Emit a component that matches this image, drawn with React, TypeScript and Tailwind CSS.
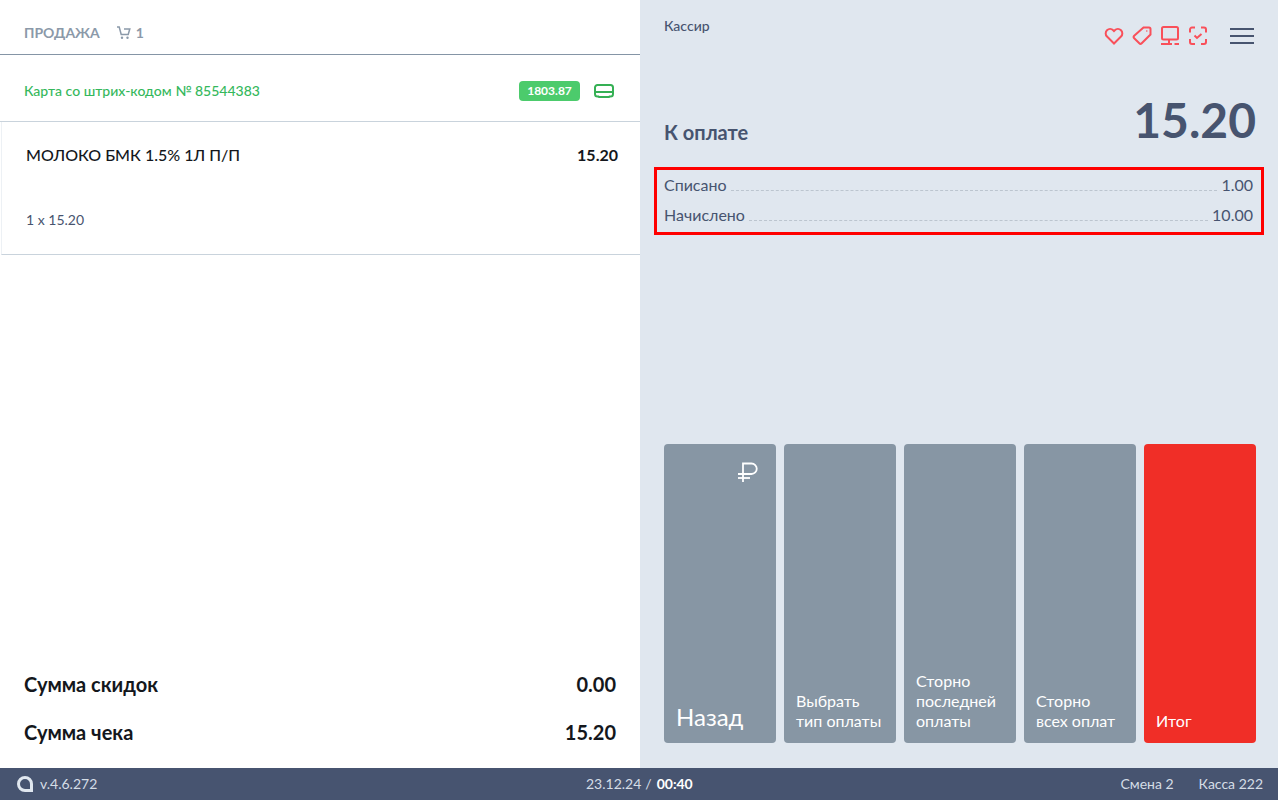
import React from "react";

const Btn = ({ children, bg = "bg-[#8796a4]", big = false, icon = false }: { children: React.ReactNode; bg?: string; big?: boolean; icon?: boolean }) => (
  <div className={`relative flex-1 h-[299px] rounded-[4px] flex flex-col justify-end px-3 ${big ? "pb-[10px] text-[24px] leading-[32px]" : "pb-[12px] text-[16px] leading-[20px]"} text-white ${bg}`}>
    {icon && (
      <svg className="absolute right-[17px] top-[17px]" width="22" height="22" viewBox="0 0 22 22" fill="none" stroke="#fff" strokeWidth="1.8">
        <path d="M6 21V2.5h8.5a5.25 5.25 0 0 1 0 10.5H1" />
        <path d="M1 17H13" />
      </svg>
    )}
    {children}
  </div>
);

const Row = ({ label, value }: { label: string; value: string }) => (
  <div className="flex items-center h-[30px] text-[16px] leading-[24px] text-[#47546f]">
    <span>{label}</span>
    <span className="flex-1 self-end mx-[4px] mb-[9px] border-b border-dashed border-[#bcc5cf]"></span>
    <span>{value}</span>
  </div>
);

export default function App() {
  return (
    <div className="w-[1278px] h-[800px] flex flex-col overflow-hidden bg-white font-['Lato','Noto_Sans',sans-serif]">
      <div className="flex flex-1 min-h-0">
        <div className="w-[640px] flex flex-col">
          <div className="h-[55px] shrink-0 border-b border-[#8595a6] flex items-center pl-[24px] pt-[11px] text-[14px] font-bold text-[#8b99a9]">
            <span>ПРОДАЖА</span>
            <svg className="ml-[16px]" width="16" height="15" viewBox="0 0 16 15" fill="none" stroke="#8b99a9" strokeWidth="1.5">
              <path d="M1 2h2.2l2 7.5h7l1.6-5.5H8" />
              <circle cx="6" cy="12.8" r="1.2" fill="#8b99a9" stroke="none" />
              <circle cx="11.5" cy="12.8" r="1.2" fill="#8b99a9" stroke="none" />
            </svg>
            <span className="ml-[4px]">1</span>
          </div>
          <div className="h-[67px] shrink-0 border-b border-[#c9d3dc] flex items-center pl-[24px] pr-[26px] pt-[6px]">
            <span className="flex-1 pb-[2px] text-[14px] font-medium text-[#35b85c]">Карта со штрих-кодом № 85544383</span>
            <span className="h-[20px] w-[61px] flex items-center justify-center rounded-[4px] bg-[#4ccb6c] text-white text-[12px] font-bold">1803.87</span>
            <svg className="ml-[14px]" width="20" height="16" viewBox="0 0 20 16" fill="none" stroke="#35b054" strokeWidth="2">
              <path d="M3.5 13.5A2.5 2.5 0 0 1 1 11V4.5A2.5 2.5 0 0 1 3.5 2h13A2.5 2.5 0 0 1 19 4.5V11a2.5 2.5 0 0 1-2.5 2.5h-1l-.5.5H5l-.5-.5z" />
              <path d="M1 9h18" />
            </svg>
          </div>
          <div className="h-[133px] shrink-0 ml-[1px] border-l border-l-[#edf1f5] border-b border-b-[#c9d3dc] pl-[24px] pr-[22px] flex flex-col">
            <div className="flex justify-between pt-[22px] text-[16px] leading-[22px] font-medium text-[#14171c]">
              <span>МОЛОКО БМК 1.5% 1Л П/П</span>
              <span className="font-bold">15.20</span>
            </div>
            <div className="mt-[44px] text-[14px] leading-[20px] text-[#47546f]">1 x 15.20</div>
          </div>
          <div className="flex-1"></div>
          <div className="pl-[24px] pr-[24px] pb-[22px] text-[#14171c] font-bold text-[20px] leading-[28px] flex flex-col gap-[20px]">
            <div className="flex justify-between"><span>Сумма скидок</span><span>0.00</span></div>
            <div className="flex justify-between"><span>Сумма чека</span><span>15.20</span></div>
          </div>
        </div>
        <div className="flex-1 bg-[#e0e7ef] flex flex-col relative">
          <div className="flex justify-between pl-[24px] pr-[24px] h-[88px]">
            <span className="pt-[16px] text-[14px] leading-[20px] font-medium text-[#47546f]">Кассир</span>
            <div className="flex items-start pt-[26px]">
              <svg width="20" height="20" viewBox="0 0 20 20" fill="none" stroke="#f9505a" strokeWidth="2" className="mr-[8px]">
                <path d="M10 17.5 3 10.5a4.3 4.3 0 0 1 0-6.2 4.4 4.4 0 0 1 6.2 0l.8.8.8-.8a4.4 4.4 0 0 1 6.2 0 4.3 4.3 0 0 1 0 6.2z" />
              </svg>
              <svg width="20" height="20" viewBox="0 0 20 20" fill="none" stroke="#f9505a" strokeWidth="2" className="mr-[8px]">
                <path d="M11.5 1.5H17a1.5 1.5 0 0 1 1.5 1.5v5.5L9.7 17.3a1.7 1.7 0 0 1-2.4 0l-5.1-5.1a1.7 1.7 0 0 1 0-2.4z" />
                <circle cx="14.8" cy="5" r=".8" fill="#f9505a" stroke="none" />
              </svg>
              <svg width="20" height="20" viewBox="0 0 20 20" fill="none" stroke="#f9505a" strokeWidth="2" className="mr-[8px]">
                <rect x="2" y="1" width="16" height="12.5" rx="1.5" />
                <path d="M9 13.5V18M1 18h11M14.5 18H19" />
              </svg>
              <svg width="20" height="20" viewBox="0 0 20 20" fill="none" stroke="#f9505a" strokeWidth="2" className="mr-[22px]">
                <path d="M2 6.5V3.5A2 2 0 0 1 4 1.5h3M13 1.5h3a2 2 0 0 1 2 2v3M18 13v3a2 2 0 0 1-2 2h-3M7 18H4a2 2 0 0 1-2-2v-3" />
                <path d="m6.5 9.5 2.5 2.5 4.5-4" />
              </svg>
              <div className="flex flex-col gap-[5px] pt-[2px] w-[24px]">
                <div className="h-[2px] bg-[#47546f]"></div>
                <div className="h-[2px] bg-[#47546f]"></div>
                <div className="h-[2px] bg-[#47546f]"></div>
              </div>
            </div>
          </div>
          <div className="flex items-end justify-between pl-[24px] pr-[22px] h-[64px]">
            <span className="text-[20px] leading-[28px] font-bold text-[#47546f] pb-[6px]">К оплате</span>
            <span className="text-[48px] leading-[64px] font-bold text-[#47546f] -mt-[4px]">15.20</span>
          </div>
          <div className="mt-[15px] ml-[14px] mr-[14px] h-[68px] border-[3px] border-[#ff0000] pl-[7px] pr-[8px]">
            <Row label="Списано" value="1.00" />
            <Row label="Начислено" value="10.00" />
          </div>
          <div className="flex-1"></div>
          <div className="flex gap-[8px] pl-[24px] pr-[22px] pb-[25px]">
            <Btn big icon>Назад</Btn>
            <Btn><span>Выбрать</span><span>тип оплаты</span></Btn>
            <Btn><span>Сторно</span><span>последней</span><span>оплаты</span></Btn>
            <Btn><span>Сторно</span><span>всех оплат</span></Btn>
            <Btn bg="bg-[#f02e27]">Итог</Btn>
          </div>
        </div>
      </div>
      <div className="h-[32px] shrink-0 bg-[#475470] flex items-center relative text-[14px] text-[#d5dde6] pl-[17px] pr-[15px] pb-[1px]">
        <svg width="16" height="16" viewBox="0 0 16 16" fill="#e0e7ef">
          <path fillRule="evenodd" d="M8 0a8 8 0 0 0 0 16h8V8a8 8 0 0 0-8-8zm0 3a5 5 0 0 1 5 5v5H8A5 5 0 0 1 8 3z" />
        </svg>
        <span className="ml-[7px]">v.4.6.272</span>
        <div className="absolute left-[586px] flex">
          <span>23.12.24</span>
          <span className="ml-[4px]">/</span>
          <span className="ml-[5px] font-bold text-white">00:40</span>
        </div>
        <div className="ml-auto flex gap-[25px]">
          <span>Смена 2</span>
          <span>Касса 222</span>
        </div>
      </div>
    </div>
  );
}
